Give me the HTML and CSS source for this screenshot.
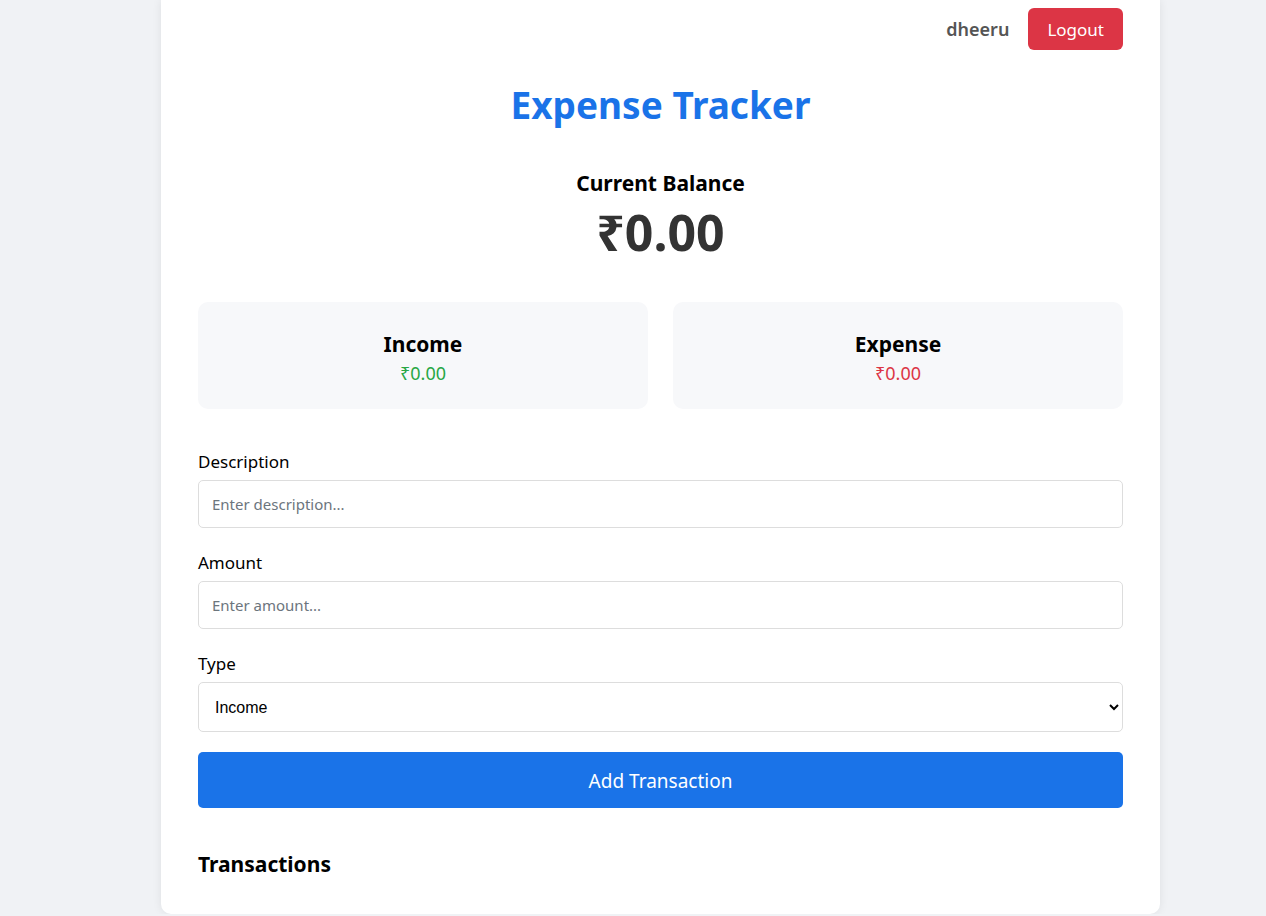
FILE: index.html
```html
<!DOCTYPE html>
<html lang="en">
<head>
<meta charset="utf-8">
<title>Expense Tracker</title>
<link rel="stylesheet" href="styles.css">
</head>
<body>
<div class="card">
  <header class="topbar">
    <span class="user">dheeru</span>
    <button class="logout">Logout</button>
  </header>
  <h1 class="title">Expense Tracker</h1>
  <section class="balance">
    <h3 class="balance-label">Current Balance</h3>
    <div class="balance-value">₹0.00</div>
  </section>
  <section class="summary">
    <div class="summary-box">
      <h4 class="summary-title">Income</h4>
      <p class="summary-amount income">₹0.00</p>
    </div>
    <div class="summary-box">
      <h4 class="summary-title">Expense</h4>
      <p class="summary-amount expense">₹0.00</p>
    </div>
  </section>
  <form class="form">
    <div class="field">
      <label class="label">Description</label>
      <input class="input" type="text" placeholder="Enter description...">
    </div>
    <div class="field">
      <label class="label">Amount</label>
      <input class="input" type="text" placeholder="Enter amount...">
    </div>
    <div class="field field-last">
      <label class="label">Type</label>
      <select class="select">
        <option>Income</option>
        <option>Expense</option>
      </select>
    </div>
    <button type="button" class="add">Add Transaction</button>
  </form>
  <h3 class="tx-title">Transactions</h3>
</div>
</body>
</html>
```

FILE: styles.css
```css
html, body {
  margin: 0;
  padding: 0;
}
body {
  background: #f0f2f5;
  font-family: "Noto Sans", "Open Sans", sans-serif;
  color: #000;
}
.card {
  box-sizing: border-box;
  width: 999px;
  margin: 0 0 0 161px;
  background: #fff;
  border-radius: 0 0 10px 10px;
  box-shadow: 0 0 10px rgba(0,0,0,0.08);
  padding: 8px 37px 37px 37px;
  height: 914px;
}
.topbar {
  display: flex;
  justify-content: flex-end;
  align-items: center;
  gap: 19px;
}
.user {
  color: #555;
  font-size: 18px;
  font-weight: 600;
}
.logout {
  background: #dc3545;
  color: #fff;
  border: none;
  border-radius: 6px;
  height: 42px;
  padding: 0 19px;
  font-family: inherit;
  font-size: 17px;
}
.title {
  margin: 31px 0 0;
  text-align: center;
  color: #1a73e8;
  font-size: 37px;
  line-height: 48px;
  font-weight: 700;
}
.balance {
  text-align: center;
  margin-top: 40px;
}
.balance-label {
  margin: 0;
  font-size: 21px;
  line-height: 28px;
  font-weight: 700;
}
.balance-value {
  font-size: 50px;
  line-height: 64px;
  margin-top: 3px;
  font-weight: 700;
  color: #333;
}
.summary {
  display: grid;
  grid-template-columns: 1fr 1fr;
  gap: 25px;
  margin-top: 38px;
}
.summary-box {
  box-sizing: border-box;
  background: #f7f8fa;
  border-radius: 10px;
  height: 107px;
  padding-top: 4px;
  display: flex;
  flex-direction: column;
  align-items: center;
  justify-content: center;
}
.summary-title {
  margin: 0;
  font-size: 21px;
  line-height: 28px;
  font-weight: 700;
}
.summary-amount {
  margin: 3px 0 0;
  font-size: 18px;
  line-height: 24px;
}
.income { color: #28a745; }
.expense { color: #dc3545; }
.form {
  margin-top: 41px;
  display: flex;
  flex-direction: column;
}
.field {
  display: flex;
  flex-direction: column;
  margin-bottom: 23px;
}
.field-last {
  margin-bottom: 20px;
}
.label {
  font-size: 17px;
  line-height: 24px;
  margin-bottom: 6px;
}
.input {
  box-sizing: border-box;
  height: 48px;
  border: 1px solid #ddd;
  border-radius: 5px;
  padding: 0 13px;
  font-family: inherit;
  font-size: 15px;
}
.input::placeholder {
  color: #6c757d;
}
.select {
  box-sizing: border-box;
  height: 50px;
  border: 1px solid #ddd;
  border-radius: 5px;
  padding: 0 12px;
  font-family: "Liberation Sans", Arial, sans-serif;
  font-size: 16px;
  background: #fff;
  color: #000;
}
.add {
  height: 56px;
  padding-top: 3px;
  background: #1a73e8;
  color: #fff;
  border: none;
  border-radius: 5px;
  font-family: inherit;
  font-size: 19px;
}
.tx-title {
  margin: 42px 0 0;
  font-size: 21px;
  line-height: 28px;
  font-weight: 700;
}
```
